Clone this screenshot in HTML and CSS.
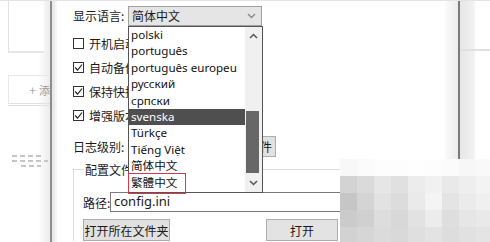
FILE: index.html
```html
<!DOCTYPE html>
<html>
<head>
<meta charset="utf-8">
<link rel="stylesheet" href="styles.css">
</head>
<body>
<div class="app">
  <aside class="sidebar">
    <div class="card"></div>
    <div class="add-btn"><span class="plus">+</span> 添</div>
    <div class="thumb">
      <div class="thumb-line w1"></div>
      <div class="thumb-line w2"></div>
      <div class="thumb-line w3"></div>
    </div>
  </aside>
  <div class="divider"></div>
  <main class="dialog">
    <div class="row lang-row">
      <span class="label">显示语言:</span>
      <div class="select">
        <span>简体中文</span>
        <svg class="chev" width="9" height="6" viewBox="0 0 9 6"><path d="M1 1 L4.5 4.5 L8 1" fill="none" stroke="#888" stroke-width="1.4"/></svg>
      </div>
    </div>
    <div class="checks">
      <label class="check"><span class="box"></span><span>开机启动</span></label>
      <label class="check"><span class="box on"><svg width="9" height="9" viewBox="0 0 9 9"><path d="M1 4.5 L3.6 7 L8 1.5" fill="none" stroke="#222" stroke-width="1.2"/></svg></span><span>自动备份</span></label>
      <label class="check"><span class="box on"><svg width="9" height="9" viewBox="0 0 9 9"><path d="M1 4.5 L3.6 7 L8 1.5" fill="none" stroke="#222" stroke-width="1.2"/></svg></span><span>保持快捷</span></label>
      <label class="check"><span class="box on"><svg width="9" height="9" viewBox="0 0 9 9"><path d="M1 4.5 L3.6 7 L8 1.5" fill="none" stroke="#222" stroke-width="1.2"/></svg></span><span>增强版本</span></label>
    </div>
    <div class="row log-row">
      <span class="label">日志级别:</span>
      <div class="btn log-btn">选择文件</div>
    </div>
    <fieldset class="group">
      <legend>配置文件</legend>
      <div class="row path-row">
        <span class="label">路径:</span>
        <div class="input">config.ini</div>
      </div>
      <div class="row btn-row">
        <div class="btn open-folder">打开所在文件夹</div>
        <div class="btn open">打开</div>
      </div>
    </fieldset>
  </main>
  <div class="rightpane">
    <div class="shade"></div>
    <div class="edge"></div>
    <div class="panel"><div class="panel-top"></div></div>
  </div>

  <div class="dropdown">
    <ul class="items">
      <li>polski</li>
      <li>português</li>
      <li>português europeu</li>
      <li>русский</li>
      <li>српски</li>
      <li class="sel">svenska</li>
      <li>Türkçe</li>
      <li>Tiếng Việt</li>
      <li>简体中文</li>
      <li>繁體中文</li>
    </ul>
    <div class="scrollbar">
      <svg class="arr" width="9" height="6" viewBox="0 0 9 6"><path d="M1 5 L4.5 1.5 L8 5" fill="none" stroke="#555" stroke-width="1.5"/></svg>
      <div class="track"><div class="thumb-bar"></div></div>
      <svg class="arr" width="9" height="6" viewBox="0 0 9 6"><path d="M1 1 L4.5 4.5 L8 1" fill="none" stroke="#555" stroke-width="1.5"/></svg>
    </div>
  </div>
  <div class="highlight"></div>

  <div class="mosaic">
    <i style="background:#f8f8f8"></i><i style="background:#fbfbfb"></i><i style="background:#fdfdfd"></i><i style="background:#fdfdfd"></i><i style="background:#fefefe"></i><i style="background:#fdfdfd"></i><i style="background:#fbfbfb"></i><i style="background:#f7f7f7"></i><i style="background:#f9f9f9"></i>
    <i style="background:#d3d3d3"></i><i style="background:#dadada"></i><i style="background:#e6e6e6"></i><i style="background:#e0e0e0"></i><i style="background:#ececec"></i><i style="background:#f1f1f1"></i><i style="background:#e9e9e9"></i><i style="background:#eeeeee"></i><i style="background:#f3f3f3"></i>
    <i style="background:#c6c6c6"></i><i style="background:#d4d4d4"></i><i style="background:#e2e2e2"></i><i style="background:#dcdcdc"></i><i style="background:#eaeaea"></i><i style="background:#f4f4f4"></i><i style="background:#e4e4e4"></i><i style="background:#ebebeb"></i><i style="background:#f0f0f0"></i>
    <i style="background:#cbcbcb"></i><i style="background:#d0d0d0"></i><i style="background:#dddddd"></i><i style="background:#d8d8d8"></i><i style="background:#e2e2e2"></i><i style="background:#ececec"></i><i style="background:#dedede"></i><i style="background:#e6e6e6"></i><i style="background:#e9e9e9"></i>
    <i style="background:#d2d2d2"></i><i style="background:#d6d6d6"></i><i style="background:#dbdbdb"></i><i style="background:#d9d9d9"></i><i style="background:#dfdfdf"></i><i style="background:#e3e3e3"></i><i style="background:#dddddd"></i><i style="background:#e1e1e1"></i><i style="background:#e4e4e4"></i>
  </div>
</div>
</body>
</html>
```
FILE: styles.css
```css
* { box-sizing: border-box; }
html, body { margin: 0; padding: 0; }
body {
  width: 490px;
  height: 242px;
  overflow: hidden;
  background: #fff;
  font-family: "Noto Sans CJK SC", "Noto Sans", sans-serif;
  font-size: 12px;
  color: #1a1a1a;
}
.app {
  position: relative;
  display: flex;
  width: 490px;
  height: 242px;
  overflow: hidden;
  border-top: 1px solid #e4e4e4;
}
.sidebar {
  width: 50px;
  flex: none;
  position: relative;
  background: linear-gradient(to right, #fff 0, #fff 38px, #ececec 50px);
  padding-left: 8px;
  display: flex;
  flex-direction: column;
}
.card {
  height: 52px;
  border-left: 1px solid #e2e2e2;
  border-bottom: 2px solid #e6e6e6;
  background: #fff;
  margin-right: 6px;
}
.add-btn {
  margin-top: 22px;
  height: 31px;
  border-top: 1px solid #e8e8e8;
  border-bottom: 3px double #e2e2e2;
  border-left: 1px solid #e8e8e8;
  color: #9a9a9a;
  font-size: 11px;
  display: flex;
  align-items: center;
  justify-content: flex-end;
  gap: 3px;
}
.add-btn .plus { font-size: 12px; color: #aaa; }
.thumb {
  margin-top: 46px;
  margin-left: 4px;
  height: 20px;
  display: flex;
  flex-direction: column;
  gap: 3px;
  padding-top: 3px;
}
.thumb-line { height: 2px; background: repeating-linear-gradient(to right, #c4c4cf 0 5px, transparent 5px 8px); }
.thumb-line.w1 { width: 32px; }
.thumb-line.w2 { width: 36px; }
.thumb-line.w3 { width: 20px; margin-left: 9px; }
.divider {
  width: 7px;
  flex: none;
  background: linear-gradient(to right, #8d8d8d 0 2px, #e9e9e9 2px 5px, #f6f6f6 5px);
}
.dialog {
  flex: 1;
  padding: 4px 0 0 16px;
  display: flex;
  flex-direction: column;
}
.row { display: flex; align-items: center; flex: none; }
.label { white-space: nowrap; }
.lang-row { height: 21px; }
.lang-row .label { width: 55px; }
.select {
  width: 134px;
  height: 20px;
  background: #e5e5e5;
  border: 1px solid #a0a0a0;
  display: flex;
  align-items: center;
  justify-content: space-between;
  padding: 0 5px 0 3px;
}
.checks { display: flex; flex-direction: column; gap: 11px; margin-top: 11px; flex: none; }
.check { display: flex; align-items: center; gap: 5px; height: 13px; }
.box {
  width: 11px; height: 11px;
  border: 1px solid #333;
  background: #fff;
  display: flex; align-items: center; justify-content: center;
}
.log-row { margin-top: 13px; height: 22px; }
.log-row .label { width: 55px; }
.btn {
  border: 1px solid #adadad;
  background: #e1e1e1;
  display: flex; align-items: center; justify-content: center;
  white-space: nowrap;
  overflow: hidden;
}
.log-btn { margin-left: 80px; width: 68px; height: 21px; justify-content: flex-end; padding-right: 3px; }
.group {
  margin: 4px 0 0 0;
  padding: 0 0 0 9px;
  border: 1px solid #dcdcdc;
  border-right: none;
  border-bottom: none;
  width: 372px;
  min-width: 0;
  flex: none;
}
.group legend { padding: 0 1px; margin-left: 1px; }
.path-row { margin-top: 14px; height: 20px; }
.path-row .label { width: 27px; }
.input {
  width: 340px;
  height: 20px;
  border: 1px solid #7a7a7a;
  border-right: none;
  padding: 0 3px;
  line-height: 17px;
  font-family: "Noto Sans", sans-serif;
  font-size: 13px;
}
.btn-row { margin-top: 7px; gap: 96px; }
.open-folder { width: 87px; height: 22px; }
.open { width: 72px; height: 22px; background: #e3e3e3; }
.rightpane {
  width: 55px;
  flex: none;
  display: flex;
}
.shade { width: 13px; background: linear-gradient(to right, #fafafa, #ececec); }
.edge { width: 2px; background: #7b7b7b; }
.panel { flex: 1; background: linear-gradient(to right, #e6e6e6 0, #f2f2f2 14px, #fff 16px); }
.panel-top { height: 50px; border-bottom: 2px solid #e0e0e0; }

.dropdown {
  position: absolute;
  left: 128px;
  top: 25px;
  width: 135px;
  height: 167px;
  background: #fff;
  border: 1px solid #555;
  display: flex;
}
.items {
  list-style: none;
  margin: 0;
  padding: 0;
  flex: 1;
  font-family: "Noto Sans", "Noto Sans CJK SC", sans-serif;
  font-size: 11.6px;
}
.items li {
  height: 16.4px;
  line-height: 16.4px;
  padding-left: 2px;
  white-space: nowrap;
  color: #111;
}
.items li.sel { background: #4f4f4f; color: #fff; }
.scrollbar {
  width: 17px;
  flex: none;
  background: #f0f0f0;
  display: flex;
  flex-direction: column;
  align-items: center;
  padding: 6px 0 6px;
}
.scrollbar .arr { flex: none; }
.track { flex: 1; width: 100%; padding: 0 3px 0 1px; }
.thumb-bar { margin-top: 72px; height: 62px; background: #676767; }
.highlight {
  position: absolute;
  left: 128px;
  top: 172px;
  width: 58px;
  height: 21px;
  border: 1.5px solid #d33b4d;
}
.mosaic {
  position: absolute;
  left: 340px;
  top: 158px;
  width: 153px;
  height: 85px;
  display: grid;
  grid-template-columns: repeat(9, 17px);
  grid-template-rows: repeat(5, 17px);
}
.mosaic i { display: block; }
```
